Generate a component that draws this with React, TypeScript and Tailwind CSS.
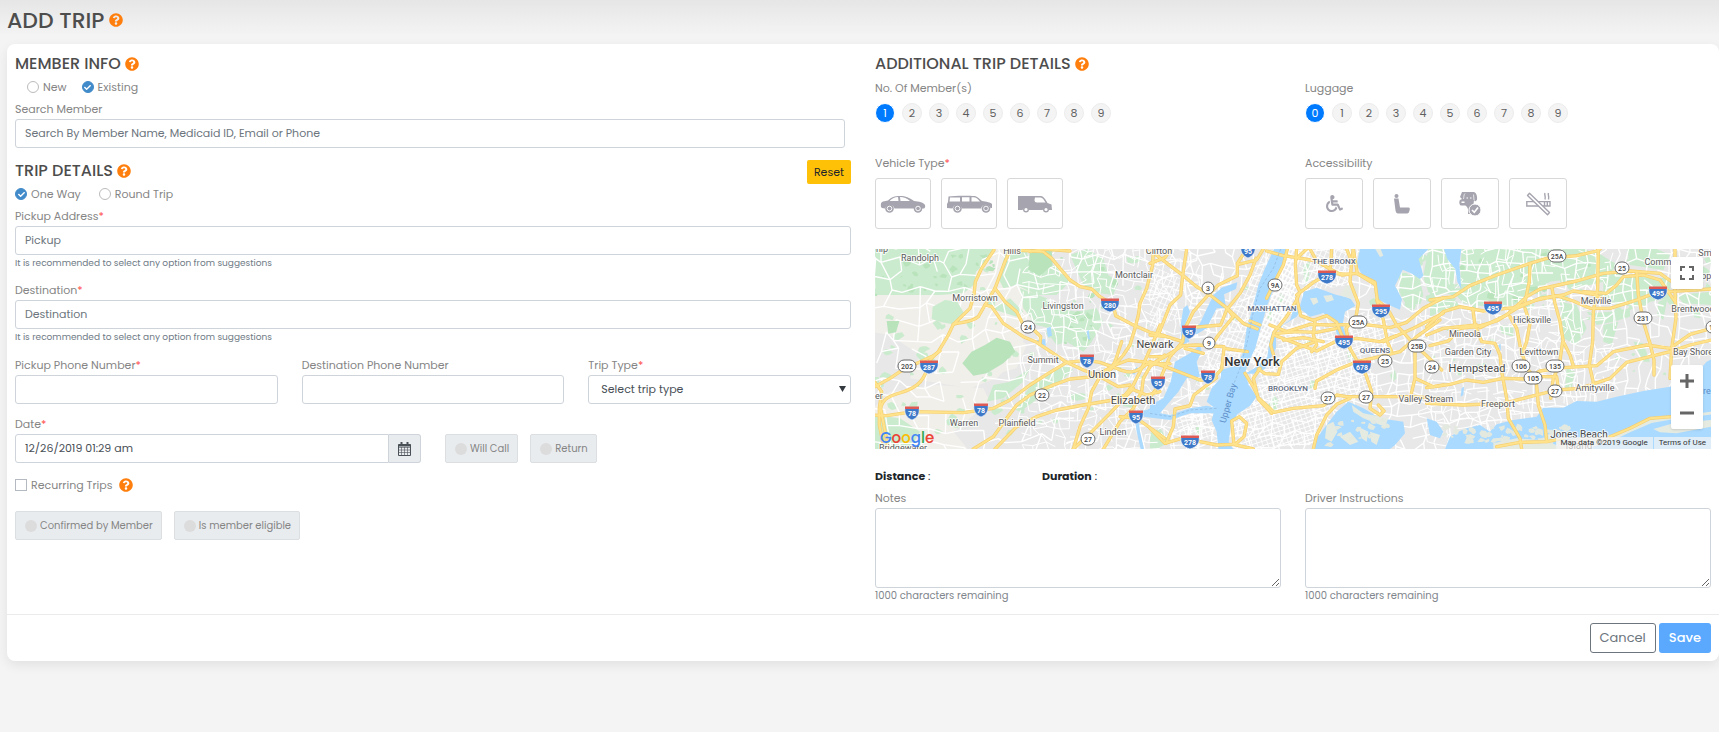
import { useState, type ReactNode } from 'react'
import { FaCheck, FaQuestionCircle, FaWheelchair } from 'react-icons/fa'
import { clsx } from 'clsx'

const inputClass =
  'block h-[29px] w-full rounded-[3px] border border-[#ced4da] bg-white px-[9px] text-[11px] text-[#495057] placeholder:text-[#6c757d] focus:outline-none'

/* ---------- map data ---------- */

// The map is drawn in three tiles, in units of a third of a pixel.
type Tile = { dx: number; rural: string[]; green: string[]; water: string[]; land: string[]; roads: string[] }
type Mark = [tile: number, text: string, x: number, y: number]

const TILES: Tile[] = [
  {
    dx: -15,
    rural: [
      '0,12 470,12 500,120 520,180 470,240 450,330 380,400 300,430 120,400 150,330 60,270 0,260',
      '60,440 200,420 340,430 360,470 250,560 300,620 0,620 0,500',
      '90,150 300,150 360,200 470,300 440,370 260,420 170,400 220,280 90,230',
    ],
    green: [
      '0,12 375,12 350,50 318,80 312,120 280,145 210,150 0,150',
      '385,100 410,12 470,12 480,70 560,60 600,110 560,150 500,150 440,120 400,130',
      '600,30 650,12 700,40 715,90 745,110 730,150 690,145 640,120',
      '560,190 620,200 680,190 700,230 665,290 640,320 590,290 560,300 530,260 545,220',
      '450,130 530,160 570,210 540,250 500,240 460,190',
      '15,510 90,520 150,560 120,612 15,612',
      '370,420 420,410 480,370 460,410 400,460 350,470',
      '500,400 590,360 610,375 560,420 450,500 430,490',
      '360,190 420,160 460,200 440,215',
    ],
    water: [
      '884,486 850,492 825,505 806,525 810,560 822,612 812,612 800,560 795,520 820,500 850,485',
      '530,250 542,245 546,272 534,276',
      '500,285 525,282 528,302 508,300',
      '800,365 805,370 792,390 786,384',
      '650,260 656,255 660,285 654,280',
    ],
    land: [],
    roads: [
      'M422,12 L405,50 L375,130 L345,180 L325,215 C300,235 270,230 250,238 L235,270 L205,320 L180,345 C165,410 140,425 110,437 S40,450 32,490 L45,560 L55,612',
      'M0,432 L15,425 L60,400 L90,380 L125,362 L190,332 L210,318',
      'M372,15 L335,70 L316,110 L312,150 L300,190 L250,238',
      'M0,510 L50,512 L130,500 L280,503 L370,490 L420,465 L480,420 L540,382 L590,352 L650,346 L690,352 L740,370 C780,390 800,380 830,358 L900,356',
      'M345,180 L365,185 L400,235 L460,275 L500,292 L550,325 L590,352 L640,375 L690,395 L745,425 L780,420',
      'M375,130 L405,170 L440,200 L460,240 L495,258 L512,275 L510,295',
      'M420,14 L520,20 L545,40 L570,70 L600,105 L630,125 L665,132 L690,155 L730,180 L737,212 L790,240 L840,262 L884,272',
      'M850,12 L848,60 L830,130 L810,175 L805,210 L795,250 L780,300 L760,330 L725,370 L690,395 L665,440 L655,490 L630,545 L610,612',
      'M310,612 L370,575 L410,520 L440,480 L480,450 L550,420 L600,402 L670,395 L740,358 L775,345 L884,358',
      'M375,612 L440,545 L500,515 L560,495 L640,480 L730,465 L765,450 L790,420 L815,370 L850,290 L870,240',
      'M884,330 L840,365 L820,400 L815,440 L790,490 L750,530 L700,612',
      'M15,412 L35,440 L28,490 L28,540 L38,590',
      'M720,375 L735,350 L755,290 M780,430 L830,450 L870,440 M750,515 L800,520 L850,555 L884,580',
      'M610,612 L660,565 L720,505 L790,430',
      'M520,12 L600,18 M480,20 L520,12',
    ],
  },
  {
    dx: 825,
    rural: [],
    green: [
      '350,215 365,190 380,190 362,228',
      '385,160 395,145 402,160 390,178',
      '460,60 480,50 475,110 462,120',
      '355,480 372,450 385,465 380,495 362,500',
      '590,320 620,330 600,350',
      '500,410 480,405 480,430 495,432',
      '745,82 780,90 810,104 820,150 812,176 770,182 752,150',
      '835,12 890,12 915,72 912,142 860,150 835,142 820,92',
      '720,390 735,375 740,400 728,410',
      '625,18 650,25 640,60 628,50',
      '30,340 45,335 40,360',
      '0,565 30,550 60,590 20,612 0,612',
      '140,540 158,548 148,570 136,560',
    ],
    water: [
      // hudson and upper bay
      '372,12 412,12 400,60 380,110 352,180 332,250 316,310 296,350 285,385 296,420 320,455 300,482 262,508 242,545 236,590 250,612 205,612 200,560 185,525 195,490 170,470 185,430 212,400 214,375 262,360 280,320 290,250 305,200 325,120 345,70',
      // kill van kull
      '-20,495 60,510 120,490 170,482 205,490 200,505 120,505 60,525 -20,515',
      // newark bay
      '75,350 120,325 150,300 155,320 140,350 150,395 110,400 85,440 55,475 30,505 0,508 0,480 40,460 62,410',
      // hackensack and the meadows
      '190,150 215,128 262,112 258,132 222,148 228,190 200,190 170,250 140,268 118,265 150,235',
      '100,190 112,180 120,200 105,240 118,290 95,300 92,240',
      // east river
      '438,170 455,190 440,215 400,240 378,262 378,310 362,340 345,372 312,386 285,386 320,366 352,335 358,290 366,262 420,225',
      // upper east river and the sound
      '462,140 500,128 560,150 600,158 616,182 585,200 578,240 590,280 560,268 552,225 520,205 480,215 448,190',
      '630,12 835,12 806,42 815,72 820,92 810,102 786,86 758,74 746,100 735,122 756,162 750,194 722,182 682,162 674,112 638,92 620,60',
      // jamaica bay
      '560,500 595,470 640,490 690,520 760,530 765,565 735,600 720,612 488,612 500,580 530,540',
    ],
    land: [
      '520,152 545,150 552,165 530,172',
      '480,160 500,158 505,172 490,180',
      '590,120 625,125 610,165 570,150',
      '605,480 640,505 715,520 705,545 640,520 610,500',
      '530,540 550,530 562,560 545,590 525,580',
      '570,575 600,560 625,590 600,600',
      '625,545 655,560 650,590 635,580',
      '660,560 690,570 680,600 664,590',
      '676,12 692,12 700,32 690,36',
    ],
    roads: [
      'M0,15 L60,62 L100,92 L140,125 M0,55 L45,38 L62,12 M98,92 L110,12 M98,92 L92,150 L60,180 L25,270',
      'M290,12 L262,55 L262,92 L205,120 L170,155 L130,200 L105,250 L98,290 L60,335 L40,380 L20,430 L-10,470',
      'M340,12 L320,45 L265,58 M318,40 L300,90 L270,145 L230,195 L212,240 L120,248',
      'M140,125 L180,150 L232,190 L280,235 L322,252 M330,240 L300,228 M232,190 L250,215 L205,270 L185,300',
      'M412,12 L400,60 L372,115 L350,160',
      'M440,12 L436,60 L440,120 L450,140 L440,165 L410,215 L372,262 L362,300 L372,335',
      'M350,18 L400,32 L440,38 L500,48 L540,72 L575,90 L620,85 L675,118',
      'M440,150 L490,112 L540,85 L600,88 M545,12 L540,85 M480,12 L500,48 L520,60 M440,40 L470,12',
      'M610,12 L622,85 L675,112 L682,165 L715,195 L740,240 L785,290 L875,375 M680,165 L700,225 L712,290 L725,320',
      'M590,12 L605,50 L600,110 L625,175 L618,215 L588,250 L600,310 L620,345 L648,390 L665,440 L660,490 L690,510 L702,498 L685,480',
      'M372,270 L430,292 L500,318 L555,290 L620,280 L690,290 L740,272 L790,250 L880,205',
      'M440,160 L452,212 L490,226 L530,212 L560,232 L575,270 L600,310 M495,228 L490,270 L500,300 L485,320',
      'M325,372 L345,386 L385,388 L395,350 L440,310 L490,292',
      'M360,240 L410,260 L480,238 L540,240 L640,238 L720,248 L770,232 L820,190 L880,158',
      'M495,430 L500,408 L560,375 L620,350 L690,335 L750,320 L800,275 L870,225',
      'M380,265 L440,260 L500,262 L560,250 M400,285 L460,278 L520,290',
      'M285,385 L310,425 L326,460 L360,490 L372,502 L430,490 L520,482 L560,450 L590,455 L650,455 L780,455 L880,460 M365,505 L325,462 L310,400 L330,370',
      'M490,612 L500,570 L530,510 L560,478 L600,460',
      'M0,350 L60,370 L150,405 L185,405 L215,372 L222,310 L292,320 M45,335 L0,360',
      'M0,270 L50,275 L98,290 M0,335 L45,335 L98,302 L140,300 L222,305 M105,310 L160,325',
      'M0,550 L45,595 L95,580 L150,590 L200,600 L250,598 L310,612',
      'M252,598 L245,528 L268,515 L290,535 L282,575 L255,598',
      'M48,595 L70,545 L75,492 L120,482 L132,450 L200,398',
      'M795,310 L795,400 L850,425 L880,420 M795,400 L778,470',
      'M610,12 L605,50 M700,290 L740,272',
    ],
  },
  {
    dx: 1665,
    rural: [],
    green: [
      '0,30 40,40 60,100 40,150 0,150',
      '95,12 300,12 470,12 500,50 440,100 360,110 290,150 200,190 100,175 60,130 90,130',
      '180,130 250,120 290,160 230,190 180,170',
      '400,60 500,20 560,60 520,110 440,130 390,110',
      '520,90 620,95 720,100 722,160 660,170 640,185 560,180 520,160',
      '390,170 440,180 470,250 440,300 400,280 395,220',
      '480,205 540,200 600,190 600,215 550,230 500,240',
      '520,240 565,230 545,300 520,290',
      '685,170 712,160 700,225 682,210',
      '590,12 680,12 720,30 700,75 600,60',
      '740,150 845,140 845,180 760,175',
      '210,240 250,245 250,275 215,265',
      '610,290 640,295 660,350 640,350',
      '410,370 435,380 425,430 405,430',
      '20,160 80,160 60,185 0,215 0,170',
    ],
    water: [
      '42,12 94,12 88,60 94,132 82,110 76,72 52,42',
      '860,335 830,350 790,395 720,425 640,438 560,455 500,470 440,468 400,488 340,488 320,515 250,525 200,538 180,560 150,540 110,550 85,560 60,575 45,612 860,612',
      '-10,520 20,530 40,560 30,580 0,570',
      '95,430 102,425 100,450 92,455',
      '205,300 212,296 212,318',
    ],
    land: [
      '540,575 600,552 660,525 720,515 845,500 845,508 720,524 665,534 600,562 545,588',
      '380,590 470,575 540,570 545,590 460,612 380,612',
      '190,595 260,580 330,585 380,600 380,612 190,612',
      '670,552 730,535 845,525 845,545 740,565 690,562',
    ],
    roads: [
      'M0,165 L70,155 L120,122 L200,90 L300,55 L350,40 L440,32 L500,18 L510,12',
      'M-10,245 L40,200 L90,185 L160,198 L250,188 L320,165 L380,152 L430,168 L480,190 L540,190 L620,165 L680,142 L845,132',
      'M0,302 L55,288 L90,250 L140,245 L200,228 L260,190 L330,160 L400,150 L430,138 L490,148 L520,160',
      'M-10,270 L40,250 L140,240 M150,248 L230,210 L290,155 L330,132 L440,108 L520,85 L600,78 L690,85 L722,108',
      'M460,140 L530,145 L560,120 L580,95 L640,90 L690,105 L735,170',
      'M128,190 L135,240 L155,290 L195,295 L210,330 L215,380 L230,460 L235,520 L270,580 L275,612',
      'M300,58 L298,110 L285,170 M240,215 L260,250 L272,310 L290,370 L318,400 L325,480 L345,540 L350,590 M285,190 L300,235 L290,290 L275,330',
      'M365,125 L375,175 L390,230 L400,290 L420,330 L430,362 M398,290 L388,360 L370,400 L362,460',
      'M505,12 L503,130 L490,200 L488,290 L478,360 L490,412',
      'M-10,428 L60,418 L110,405 L160,412 L220,400 L290,402 L330,378 L400,368 L500,362 L550,320 L650,300 L720,310 L780,268 L845,250',
      'M-10,475 L100,480 L220,475 L300,455 L380,435 L450,430 L540,400 L590,352 L720,320 L780,300 L845,285',
      'M620,80 L625,150 L640,230 L660,295 L672,345 L672,390 M735,12 L735,140 L738,220 L725,310 L720,400',
      'M540,575 L600,550 L660,520 L725,515 M200,605 L270,592 L350,590 L400,580 M330,395 L380,395 L385,430',
    ],
  },
]

const INTERSTATES: Mark[] = [
  [0, '280', 720, 180], [0, '287', 177, 366], [0, '78', 652, 347], [0, '78', 127, 505], [0, '78', 332, 495],
  [0, '95', 797, 515], [1, '95', 25, 413], [1, '95', 295, 17], [1, '95', 117, 260], [1, '78', 175, 395],
  [1, '278', 530, 97], [1, '295', 692, 197], [1, '495', 582, 292], [1, '678', 635, 367], [1, '278', 120, 590],
  [2, '495', 188, 190], [2, '495', 684, 145],
]

const ROUTES: Mark[] = [
  [0, '24', 475, 245], [0, '202', 112, 363], [0, '22', 515, 450], [0, '27', 655, 583], [1, '3', 173, 130],
  [1, '9A', 375, 121], [1, '9', 176, 294], [1, '25A', 624, 231], [1, '25B', 800, 302], [1, '25', 705, 348],
  [1, '24', 846, 365], [1, '27', 533, 460], [1, '27', 647, 456], [2, '25A', 382, 33], [2, '25', 575, 68],
  [2, '231', 640, 219], [2, '106', 272, 362], [2, '135', 374, 364], [2, '105', 310, 398], [2, '27', 376, 438],
  [2, '111', 856, 245],
]

const TOWNS: Mark[] = [
  [0, 'hip', 35, 12], [0, 'Randolph', 150, 40], [0, 'Hills', 425, 18], [0, 'Clifton', 868, 18],
  [0, 'Montclair', 792, 90], [0, 'Morristown', 315, 160], [0, 'Livingston', 578, 183], [0, 'Summit', 518, 346],
  [0, 'Warren', 282, 533], [0, 'Plainfield', 442, 533], [0, 'Linden', 728, 560], [0, 'Bridgewater', 98, 608],
  [0, 'er', 27, 453], [1, 'Valley Stream', 827, 463], [2, 'Commack', 704, 52], [2, 'Smi', 828, 25],
  [2, 'Hauppauge', 833, 93], [2, 'Melville', 497, 167], [2, 'Hicksville', 307, 224], [2, 'Brentwood', 788, 192],
  [2, 'Mineola', 104, 267], [2, 'Garden City', 115, 320], [2, 'Levittown', 327, 322], [2, 'Bay Shore', 790, 322],
  [2, 'Amityville', 495, 430], [2, 'Freeport', 204, 478],
]

const CITIES: Mark[] = [
  [0, 'Newark', 854, 298], [0, 'Union', 695, 387], [0, 'Elizabeth', 788, 464], [2, 'Hempstead', 141, 368],
]

const BEACHES: Mark[] = [
  [2, 'Jones Beach', 447, 570], [2, 'Island', 447, 603],
]

const BOROUGHS: Mark[] = [
  [1, 'THE BRONX', 552, 47], [1, 'MANHATTAN', 367, 190], [1, 'QUEENS', 675, 314], [1, 'BROOKLYN', 415, 430],
]

const place = ([tile, , x, y]: Mark) => ({ x: Math.round((x + TILES[tile].dx) / 3), y: Math.round((y - 12) / 3) })

function makeRandom(seed: number) {
  let s = seed
  return () => {
    s = (s * 16807) % 2147483647
    return s / 2147483647
  }
}

// Jittered grid of local streets between x0 and x1
function streets(x0: number, x1: number, step: number, keep: number, seed: number, slant: number) {
  const rnd = makeRandom(seed)
  const cols = Math.ceil((x1 - x0) / step) + 1
  const rows = Math.ceil(640 / step) + 1
  const nodes: number[][][] = []
  for (let r = 0; r < rows; r++) {
    nodes.push([])
    for (let c = 0; c < cols; c++) {
      const x = x0 + c * step + (rnd() - 0.5) * step * 0.7 + Math.sin(r * 0.5 + c * 0.2) * slant
      const y = r * step - 20 + (rnd() - 0.5) * step * 0.7 + Math.sin(c * 0.4) * slant
      nodes[r].push([Math.round(x), Math.round(y)])
    }
  }
  let d = ''
  for (let r = 0; r < rows; r++) {
    for (let c = 0; c < cols; c++) {
      const [x, y] = nodes[r][c]
      if (c + 1 < cols && rnd() < keep) d += `M${x},${y}L${nodes[r][c + 1][0]},${nodes[r][c + 1][1]}`
      if (r + 1 < rows && rnd() < keep) d += `M${x},${y}L${nodes[r + 1][c][0]},${nodes[r + 1][c][1]}`
    }
  }
  return d
}

// Small irregular patches (parks, marsh islands) inside a box
function patches(x0: number, y0: number, x1: number, y1: number, count: number, size: number, seed: number) {
  const rnd = makeRandom(seed)
  let d = ''
  for (let i = 0; i < count; i++) {
    const cx = x0 + rnd() * (x1 - x0)
    const cy = y0 + rnd() * (y1 - y0)
    const r = size * (0.4 + rnd())
    for (let k = 0; k < 7; k++) {
      const a = (k / 7) * Math.PI * 2
      const q = r * (0.5 + rnd() * 0.8)
      d += `${k ? 'L' : 'M'}${Math.round(cx + Math.cos(a) * q)},${Math.round(cy + Math.sin(a) * q * 0.8)}`
    }
    d += 'Z'
  }
  return d
}

const RURAL_STREETS = streets(-20, 1000, 46, 0.6, 77, 12)
const SUBURB_STREETS = streets(440, 960, 24, 0.6, 131, 6)
const TOWN_STREETS = streets(940, 2520, 32, 0.72, 911, 8)
const ISLAND_STREETS = streets(1640, 2200, 25, 0.4, 47, 6)
const PARKS = patches(0, 0, 800, 600, 80, 14, 5) + patches(1500, 0, 2508, 200, 90, 15, 29) + patches(800, 0, 2500, 420, 40, 7, 83)
const DARK_PARKS = patches(0, 0, 360, 140, 30, 9, 15) + patches(560, 20, 720, 300, 16, 9, 61) + patches(1760, 0, 2150, 160, 14, 10, 71)
const MARSH = patches(1710, 535, 2090, 580, 60, 10, 19) + patches(1360, 500, 1560, 600, 16, 9, 37)

function TripMap() {
  const layer = (key: 'rural' | 'green' | 'water' | 'land', fill: string) =>
    TILES.map((tile) => (
      <g key={tile.dx} transform={`translate(${tile.dx} -12)`} fill={fill}>
        {tile[key].map((points) => (
          <polygon key={points} points={points} />
        ))}
      </g>
    ))

  const roads = (stroke: string, width: number) =>
    TILES.map((tile) => (
      <g key={tile.dx} transform={`translate(${tile.dx} -12)`} stroke={stroke} strokeWidth={width} fill="none">
        {tile.roads.map((d) => (
          <path key={d} d={d} strokeLinejoin="round" strokeLinecap="round" />
        ))}
      </g>
    ))

  return (
    <svg className="block h-full w-full bg-[#e8e8e8]" role="img" aria-label="Route map">
      <defs>
        <pattern id="grid-manhattan" width="11" height="16" patternUnits="userSpaceOnUse" patternTransform="rotate(28)">
          <path d="M0 0H11M0 0V16" stroke="#fff" strokeWidth="9" />
        </pattern>
        <pattern id="grid-brooklyn" width="15" height="13" patternUnits="userSpaceOnUse" patternTransform="rotate(-18)">
          <path d="M0 0H15M0 0V13" stroke="#fff" strokeWidth="5" />
        </pattern>
        <pattern id="grid-jersey" width="14" height="18" patternUnits="userSpaceOnUse" patternTransform="rotate(24)">
          <path d="M0 0H14M0 0V18" stroke="#fff" strokeWidth="5" />
        </pattern>
      </defs>
      <g transform="scale(0.33333)">
        {layer('rural', '#f1efea')}
        {layer('green', '#cbebce')}
        <path d={PARKS} fill="#cbebce" />
        <path d={DARK_PARKS} fill="#b8e3bb" />
        <g fill="none" stroke="#fff">
          <path d={RURAL_STREETS} strokeWidth="4" />
          <path d={SUBURB_STREETS} strokeWidth="3" />
          <path d={TOWN_STREETS} strokeWidth="4" />
          <path d={ISLAND_STREETS} strokeWidth="3" />
        </g>
        <g transform="translate(-15 -12)" fill="#b8e3bb">
          <polygon points="480,12 545,12 548,60 510,92 475,75" />
          <polygon points="277,355 305,320 345,300 380,278 420,290 436,320 400,355 350,385 310,392" />
          <polygon points="188,185 225,165 262,170 282,205 262,240 215,232 185,222" fill="#cbebce" />
          <polygon points="50,228 88,228 78,262 55,266" />
        </g>
        <g transform="translate(825 -12)">
          <polygon fill="url(#grid-manhattan)" points="412,12 440,12 440,165 378,260 362,335 320,366 298,352 332,250 380,110" />
          <polygon fill="url(#grid-brooklyn)" points="330,370 400,330 480,300 640,330 700,440 560,480 480,600 250,612 250,520 320,460" />
          <polygon fill="url(#grid-brooklyn)" points="380,265 470,220 560,240 640,200 720,240 720,330 500,330 390,340" />
          <polygon fill="url(#grid-jersey)" points="340,30 370,12 300,220 278,340 215,370 130,440 180,300 250,190" />
          <polygon fill="url(#grid-brooklyn)" points="70,510 180,505 195,580 100,590" />
          <polygon fill="url(#grid-jersey)" points="0,60 90,100 80,220 0,260" />
          <polygon fill="url(#grid-jersey)" points="440,12 600,12 600,120 460,140" />
        </g>
        {layer('water', '#aadaff')}
        {layer('land', '#e6ebe2')}
        <path d={MARSH} fill="#e4e9e0" />
        {roads('#f6cf70', 10)}
        {roads('#ffe38c', 6)}
        <g transform="translate(825 -12)" fill="none" stroke="#8fb3d9" strokeWidth="2" strokeDasharray="8 6">
          <path d="M392,12 L370,70 L330,130 L310,200 L292,290 L270,370 L250,420 M0,505 L60,515 L120,495 L200,490" />
        </g>
      </g>

      {INTERSTATES.map((mark, i) => {
        const { x, y } = place(mark)
        const w = mark[1].length > 2 ? 9 : 7
        return (
          <g key={i} transform={`translate(${x} ${y})`}>
            <path d={`M${-w} -5H${w}C${w + 1} 1 ${w - 2} 5 0 7C${2 - w} 5 ${-w - 1} 1 ${-w} -5Z`} fill="#3e78c8" stroke="#fff" strokeWidth=".6" />
            <path d={`M${-w} -6.500H${w}V-4H${-w}Z`} fill="#dd5a55" />
            <text y="3" textAnchor="middle" className="fill-white text-[7px] font-bold">
              {mark[1]}
            </text>
          </g>
        )
      })}
      {ROUTES.map((mark, i) => {
        const { x, y } = place(mark)
        const w = mark[1].length > 2 ? 9 : mark[1].length > 1 ? 7 : 6
        return (
          <g key={i} transform={`translate(${x} ${y})`}>
            <rect x={-w} y="-6" width={w * 2} height="12" rx="6" fill="#fff" stroke="#6b6b6b" />
            <text y="3" textAnchor="middle" className="fill-[#444] text-[7px] font-medium">
              {mark[1]}
            </text>
          </g>
        )
      })}
      <g textAnchor="middle" stroke="#fff" strokeOpacity=".8" strokeWidth="2" paintOrder="stroke" strokeLinejoin="round">
        {TOWNS.map((mark) => (
          <text key={mark[1]} {...place(mark)} dy="3" className="fill-[#5b5b5b] text-[9px]">
            {mark[1]}
          </text>
        ))}
        {CITIES.map((mark) => (
          <text key={mark[1]} {...place(mark)} dy="4" className="fill-[#4a4a4a] text-[11px]">
            {mark[1]}
          </text>
        ))}
        {BEACHES.map((mark) => (
          <text key={mark[1]} {...place(mark)} dy="3" className="fill-[#4a4a4a] text-[10px]">
            {mark[1]}
          </text>
        ))}
        {BOROUGHS.map((mark) => (
          <text key={mark[1]} {...place(mark)} dy="3" className="fill-[#5f6b7f] text-[8px] font-medium">
            {mark[1]}
          </text>
        ))}
        <text x="377" y="117" className="fill-[#333] text-[13px] font-medium">
          New York
        </text>
      </g>
      <text transform="translate(356 155) rotate(-74)" textAnchor="middle" className="fill-[#5f8fc9] text-[9px]">
        Upper Bay
      </text>
      <text x="828" y="145" className="fill-[#5f8fc9] text-[9px]">
        re
      </text>
    </svg>
  )
}

/* ---------- icons ---------- */

function SedanIcon() {
  return (
    <svg className="h-[18px] w-[46px]" viewBox="0 0 46 18" fill="#a6a5af">
      <path d="M1 12C.5 9 1 7 3 6.500L8 5.500C12 2 14 1 20 1C26 1 29 2.500 34 6C39 6.500 44 7.500 45 10C45.500 12 45 13 44 13.500H42A5 5 0 0 0 34 13.500H14.500A5 5 0 0 0 5 13.500L2 13Z" />
      <path d="M10 5.500C12.500 3 14.500 2.200 18 2L18.500 6H10ZM20 2C24 2 27 3.500 30 6L20.500 6Z" fill="#fff" />
      {[9.5, 38].map((x) => (
        <g key={x}>
          <circle cx={x} cy="13.500" r="4.300" />
          <circle cx={x} cy="13.500" r="2.300" fill="none" stroke="#fff" strokeWidth=".9" />
        </g>
      ))}
    </svg>
  )
}

function SuvIcon() {
  return (
    <svg className="h-[18px] w-[47px]" viewBox="0 0 47 18" fill="#a6a5af">
      <path d="M1 12V9L2 7L2.500 1.500C8 .5 22 .5 29 1C32 2 34 4.500 36 6C40 6.500 45 7.500 46 9V13H44.500A5 5 0 0 0 35 13.500H16A5 5 0 0 0 6.500 13.500L1 13Z" />
      <path d="M4 2.500H14V6.500H3.500ZM16 2.300H23.500V6.500H16ZM25.500 2.300H28C31 2.800 32 4.500 34 6.500H25.500Z" fill="#fff" />
      {[11.5, 40].map((x) => (
        <g key={x}>
          <circle cx={x} cy="13.500" r="4.300" />
          <circle cx={x} cy="13.500" r="2.300" fill="none" stroke="#fff" strokeWidth=".9" />
        </g>
      ))}
    </svg>
  )
}

function VanIcon() {
  return (
    <svg className="h-[18px] w-[36px]" viewBox="0 0 36 18" fill="#a6a5af">
      <path d="M1 1H24C26.500 1 29 5 30.500 8L34.500 9.500L35 15H31.500A3.500 3.500 0 0 0 25.500 15H12A3.500 3.500 0 0 0 5.500 15H1Z" />
      <path d="M18 2.500H23.500C25.500 2.500 27 5 28.500 7.500H20Q17.500 7.500 17.500 5Z" fill="#fff" />
      {[9, 29].map((x) => (
        <circle key={x} cx={x} cy="14.500" r="2.300" fill="#fff" stroke="#a6a5af" strokeWidth="1.400" />
      ))}
    </svg>
  )
}

function SeatIcon() {
  return (
    <svg className="h-5 w-4" viewBox="0 0 16 20" fill="#a6a5af">
      <circle cx="2.500" cy="2" r="2" />
      <path d="M0 4.500H4.500L6 13.500H14.500C16 13.500 16 15 15.500 16.500C15 18.500 14.500 19.500 13 19.500H4C2.500 19.500 2 18.500 1.500 16.500Z" />
    </svg>
  )
}

function ServiceDogIcon() {
  return (
    <svg className="h-6 w-[22px]" viewBox="0 0 22 24" fill="#a6a5af">
      <path d="M3 0H15C17.500 1 18.500 4 18 8L16 9.500L15 8C15 10 14.500 12 14 14L12 22H9C9.500 18 9 15 6.500 13.500H2C0 13 0 9 1 8L3 7L1 5Z" />
      <path d="M6 1.500C4.500 3 5 5 4.500 7M14.500 2.500L15 8" fill="none" stroke="#fff" strokeWidth=".7" />
      <path d="M7.500 5.500H9V6.500H7.500ZM11 5.500H12.500V6.500H11ZM2.500 9.500H5.500V11H2.500Z" fill="#fff" />
      <circle cx="16" cy="18" r="6" stroke="#fff" />
      <path d="M13 18L15.300 20.300L19 15.500" fill="none" stroke="#fff" strokeWidth="1.600" />
    </svg>
  )
}

function NoSmokingIcon() {
  return (
    <svg className="h-6 w-[25px]" viewBox="0 0 25 24" fill="none" stroke="#a6a5af" strokeWidth="1.400">
      <path d="M.8 9.600H24V14H.8ZM18.500 9.600V14M21.300 9.600V14" />
      <path d="M19 1C18 3 20 4 19 7.500M22.500 1C21.500 3 23.500 4 22.500 7.500" />
      <path d="M1.500 3.500L3.500 1.200L23.500 20.500L21.500 22.800Z" fill="#fff" strokeLinejoin="round" />
    </svg>
  )
}

function CalendarIcon() {
  return (
    <svg className="h-[14px] w-[13px]" viewBox="0 0 13 14" fill="none" stroke="#495057">
      <path d="M.5 2.500H12.500V13.500H.5Z" />
      <path d="M.5 5.500H12.500M.5 8H12.500M.5 10.500H12.500M3.500 5V13M6.500 5V13M9.500 5V13" strokeWidth=".6" />
      <path d="M1 2.500H12V4H1Z" fill="#495057" />
      <path d="M3.500 0V4M9.500 0V4" strokeWidth="2" />
    </svg>
  )
}

/* ---------- form parts ---------- */

function Help() {
  return (
    <button type="button" aria-label="Help" className="shrink-0 text-[#ff7f0e]">
      <FaQuestionCircle className="h-[14px] w-[14px]" />
    </button>
  )
}

function SectionTitle({ children }: { children: ReactNode }) {
  return (
    <div className="flex h-6 items-center gap-1">
      <h2 className="text-base leading-6 font-medium text-[#4d4d4d]">{children}</h2>
      <Help />
    </div>
  )
}

function FieldLabel({ htmlFor, required, children }: { htmlFor?: string; required?: boolean; children: ReactNode }) {
  return (
    <label htmlFor={htmlFor} className="block h-[22px] text-[11px] leading-6 text-[#858585]">
      {children}
      {required && <span className="text-[#ff4d4d]">*</span>}
    </label>
  )
}

function RadioOption({ name, label, defaultChecked }: { name: string; label: string; defaultChecked?: boolean }) {
  return (
    <label className="flex items-center gap-1 text-[11px] text-[#858585]">
      <span className="relative flex h-3 w-3 items-center justify-center">
        <input
          type="radio"
          name={name}
          defaultChecked={defaultChecked}
          className="peer h-3 w-3 appearance-none rounded-full border border-[#bbb] bg-white checked:border-[#428bca] checked:bg-[#428bca]"
        />
        <FaCheck className="pointer-events-none absolute hidden h-[7px] w-[7px] text-white peer-checked:block" />
      </span>
      {label}
    </label>
  )
}

function DisabledOption({ label }: { label: string }) {
  return (
    <label className="flex h-[29px] items-center gap-[3px] rounded-[2px] border border-[#dcdfe2] bg-[#e9ecef] pr-2 pl-[9px] text-[10px] text-[#858585]">
      <input type="checkbox" disabled className="h-3 w-3 appearance-none rounded-full bg-[#dcdcdc]" />
      {label}
    </label>
  )
}

function NumberPicker({ label, from, initial }: { label: string; from: number; initial: number }) {
  const [value, setValue] = useState(initial)
  const numbers = Array.from({ length: 10 - from }, (_, i) => from + i)
  return (
    <div role="group" aria-label={label}>
      <FieldLabel>{label}</FieldLabel>
      <div className="mt-[5px] flex gap-[7px]">
        {numbers.map((n) => (
          <button
            key={n}
            type="button"
            aria-pressed={n === value}
            onClick={() => setValue(n)}
            className={clsx(
              'h-5 w-5 rounded-full border text-[11px] leading-none',
              n === value ? 'border-white bg-[#007bff] text-white' : 'border-[#ececec] bg-[#f4f4f4] text-[#5f5f5f]',
            )}
          >
            {n}
          </button>
        ))}
      </div>
    </div>
  )
}

function IconTile({ label, wide, children }: { label: string; wide?: boolean; children: ReactNode }) {
  return (
    <button
      type="button"
      aria-label={label}
      className={clsx(
        'flex h-[51px] items-center justify-center rounded-[3px] border border-[#d8d8d8] bg-white text-[#a6a5af]',
        wide ? 'w-[58px]' : 'w-14',
      )}
    >
      {children}
    </button>
  )
}

function NoteField({ id, label }: { id: string; label: string }) {
  return (
    <div>
      <FieldLabel htmlFor={id}>{label}</FieldLabel>
      <textarea id={id} className="block h-20 w-full rounded-[3px] border border-[#ced4da] bg-white p-2 text-[11px]" />
      <p className="h-[15px] text-[10px] leading-[15px] text-[#7f868d]">1000 characters remaining</p>
    </div>
  )
}

export default function App() {
  return (
    <div className="min-h-screen overflow-x-hidden bg-[#f4f4f4] bg-linear-to-b from-[#e6e6e6] to-[#f4f4f4] to-[36px] pl-[7px] font-['Poppins','Inter',sans-serif]">
      <header className="flex h-11 items-center gap-[5px] pb-1">
        <h1 className="text-[22px] font-medium text-[#4d4d4d]">ADD TRIP</h1>
        <Help />
      </header>

      <form className="rounded-lg bg-white shadow-[0_4px_12px_rgba(0,0,0,0.08)]" onSubmit={(e) => e.preventDefault()}>
        <div className="grid grid-cols-2 gap-6 px-2 pt-2 pb-[11px]">
          {/* Member and trip */}
          <div>
            <SectionTitle>MEMBER INFO</SectionTitle>
            <div className="mt-px flex h-5 items-center gap-[15px] pl-3">
              <RadioOption name="member" label="New" />
              <RadioOption name="member" label="Existing" defaultChecked />
            </div>
            <div className="pr-[6px]">
              <FieldLabel htmlFor="search">Search Member</FieldLabel>
              <input id="search" className={inputClass} placeholder="Search By Member Name, Medicaid ID, Email or Phone" />
            </div>

            <div className="mt-[11px] flex h-[25px] items-start justify-between">
              <SectionTitle>TRIP DETAILS</SectionTitle>
              <button type="button" className="h-6 self-end rounded-[2px] bg-[#ffc107] px-[7px] text-[11px] text-[#212529]">
                Reset
              </button>
            </div>
            <div className="flex h-5 items-center gap-[18px]">
              <RadioOption name="way" label="One Way" defaultChecked />
              <RadioOption name="way" label="Round Trip" />
            </div>

            <FieldLabel htmlFor="pickup" required>Pickup Address</FieldLabel>
            <input id="pickup" className={inputClass} placeholder="Pickup" />
            <p className="h-[15px] text-[9px] leading-[17px] text-[#6f7b86]">It is recommended to select any option from suggestions</p>

            <div className="mt-2">
              <FieldLabel htmlFor="destination" required>Destination</FieldLabel>
              <input id="destination" className={inputClass} placeholder="Destination" />
              <p className="h-[15px] text-[9px] leading-[17px] text-[#6f7b86]">It is recommended to select any option from suggestions</p>
            </div>

            <div className="mt-[9px] grid grid-cols-3 gap-6">
              <div>
                <FieldLabel htmlFor="pickup-phone" required>Pickup Phone Number</FieldLabel>
                <input id="pickup-phone" type="tel" className={inputClass} />
              </div>
              <div>
                <FieldLabel htmlFor="destination-phone">Destination Phone Number</FieldLabel>
                <input id="destination-phone" type="tel" className={inputClass} />
              </div>
              <div>
                <FieldLabel htmlFor="trip-type" required>Trip Type</FieldLabel>
                <div className="relative">
                  <select id="trip-type" className="block h-[29px] w-full appearance-none rounded-[3px] border border-[#ced4da] bg-white px-3 text-[11px] text-[#495057]">
                    <option>Select trip type</option>
                  </select>
                  <svg className="pointer-events-none absolute top-[11px] right-[5px] h-[6px] w-[7px]" viewBox="0 0 7 6" fill="#343a40">
                    <path d="M0 0H7L3.500 6Z" />
                  </svg>
                </div>
              </div>
            </div>

            <div className="mt-2 grid grid-cols-2 gap-6">
              <div>
                <FieldLabel htmlFor="date" required>Date</FieldLabel>
                <div className="flex">
                  <input
                    id="date"
                    defaultValue="12/26/2019 01:29 am"
                    className="h-[29px] min-w-0 flex-1 rounded-l-[3px] border border-[#ced4da] px-[9px] text-[11px] text-[#495057]"
                  />
                  <button
                    type="button"
                    aria-label="Open calendar"
                    className="flex h-[29px] w-8 items-center justify-center rounded-r-[3px] border border-l-0 border-[#ced4da] bg-[#e9ecef]"
                  >
                    <CalendarIcon />
                  </button>
                </div>
              </div>
              <div className="flex items-end gap-3">
                <DisabledOption label="Will Call" />
                <DisabledOption label="Return" />
              </div>
            </div>

            <div className="mt-[10px] flex h-6 items-center gap-[6px]">
              <label className="flex items-center gap-1 text-[11px] text-[#858585]">
                <input type="checkbox" className="h-3 w-3 appearance-none border border-[#b5bac0] bg-white checked:bg-[#428bca]" />
                Recurring Trips
              </label>
              <Help />
            </div>

            <div className="mt-[14px] flex gap-3">
              <DisabledOption label="Confirmed by Member" />
              <DisabledOption label="Is member eligible" />
            </div>
          </div>

          {/* Additional details */}
          <div>
            <SectionTitle>ADDITIONAL TRIP DETAILS</SectionTitle>
            <div className="grid grid-cols-2 gap-x-6 gap-y-7">
              <NumberPicker label="No. Of Member(s)" from={1} initial={1} />
              <NumberPicker label="Luggage" from={0} initial={0} />
              <div>
                <FieldLabel required>Vehicle Type</FieldLabel>
                <div className="mt-[5px] flex gap-[10px]">
                  <IconTile label="Sedan"><SedanIcon /></IconTile>
                  <IconTile label="SUV"><SuvIcon /></IconTile>
                  <IconTile label="Van"><VanIcon /></IconTile>
                </div>
              </div>
              <div>
                <FieldLabel>Accessibility</FieldLabel>
                <div className="mt-[5px] flex gap-[10px]">
                  <IconTile label="Wheelchair" wide><FaWheelchair className="h-[19px] w-[17px]" /></IconTile>
                  <IconTile label="Child seat" wide><SeatIcon /></IconTile>
                  <IconTile label="Service animal" wide><ServiceDogIcon /></IconTile>
                  <IconTile label="No smoking" wide><NoSmokingIcon /></IconTile>
                </div>
              </div>
            </div>

            <div className="relative mt-5 h-[200px] overflow-hidden font-['Roboto',sans-serif]">
              <TripMap />
              <div className="absolute top-2 right-2">
                <button type="button" aria-label="Full screen" className="flex h-8 w-8 items-center justify-center rounded-[2px] bg-white shadow">
                  <svg className="h-[14px] w-[14px]" viewBox="0 0 14 14" fill="none" stroke="#666" strokeWidth="2">
                    <path d="M1 5V1H5M9 1H13V5M13 9V13H9M5 13H1V9" />
                  </svg>
                </button>
              </div>
              <div className="absolute right-2 bottom-5 flex flex-col rounded-[2px] bg-white shadow">
                <button type="button" aria-label="Zoom in" className="flex h-8 w-8 items-center justify-center">
                  <svg className="h-[14px] w-[14px]" viewBox="0 0 14 14" stroke="#666" strokeWidth="3">
                    <path d="M0 7H14M7 0V14" />
                  </svg>
                </button>
                <button type="button" aria-label="Zoom out" className="flex h-8 w-8 items-center justify-center">
                  <svg className="h-[14px] w-[14px]" viewBox="0 0 14 14" stroke="#666" strokeWidth="3">
                    <path d="M0 7H14" />
                  </svg>
                </button>
              </div>
              <a
                href="#google"
                aria-label="Google"
                className="absolute bottom-0 left-[5px] font-['Poppins','Lato',sans-serif] text-[15px] leading-[22px] font-medium"
              >
                <span className="text-[#4285f4]">G</span>
                <span className="text-[#ea4335]">o</span>
                <span className="text-[#fbbc05]">o</span>
                <span className="text-[#4285f4]">g</span>
                <span className="text-[#34a853]">l</span>
                <span className="text-[#ea4335]">e</span>
              </a>
              <div className="absolute right-0 bottom-0 flex h-3 items-center gap-px text-[8px] leading-3 text-[#333]">
                <span className="bg-[#f5f5f5]/70 px-[5px]">Map data ©2019 Google</span>
                <a href="#terms" className="bg-[#f5f5f5]/70 px-[5px]">Terms of Use</a>
              </div>
            </div>

            <dl className="mt-[17px] flex h-5 items-center text-[11px] text-[#212529]">
              <div className="w-[167px]">
                <dt><b>Distance</b> :</dt>
              </div>
              <div>
                <dt><b>Duration</b> :</dt>
              </div>
            </dl>
            <div className="grid grid-cols-2 gap-6">
              <NoteField id="notes" label="Notes" />
              <NoteField id="driver" label="Driver Instructions" />
            </div>
          </div>
        </div>

        <footer className="flex justify-end gap-[3px] border-t border-[#ebebeb] p-2">
          <button type="button" className="h-[30px] rounded-[3px] border border-[#6c757d] px-[9px] text-[13px] text-[#6c757d]">
            Cancel
          </button>
          <button type="submit" className="h-[30px] rounded-[3px] bg-[#5aa9ff] px-[10px] text-[13px] font-medium text-white">
            Save
          </button>
        </footer>
      </form>
    </div>
  )
}
